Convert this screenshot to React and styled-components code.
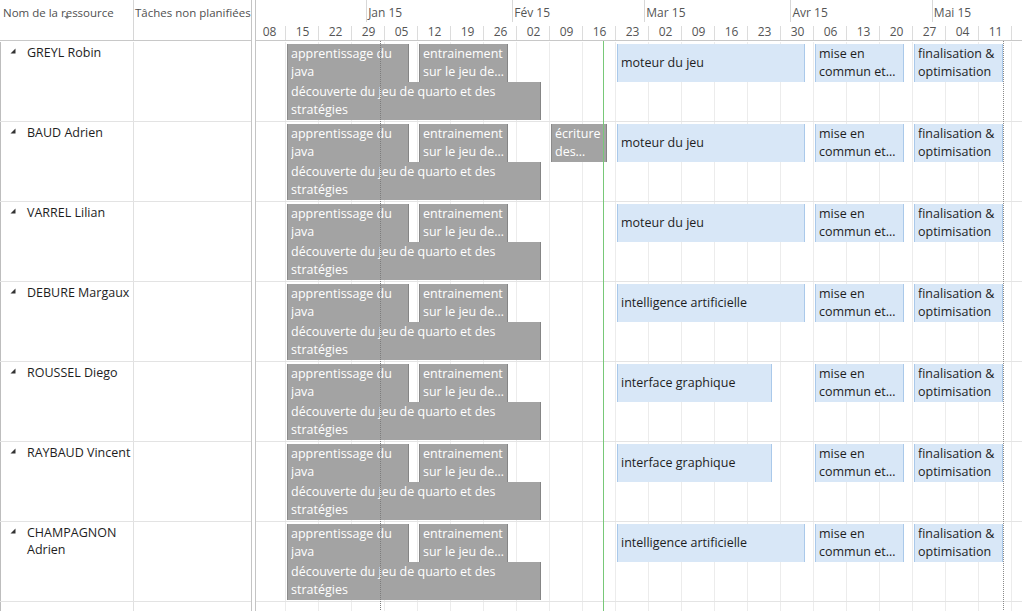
import React from 'react';
import styled, { createGlobalStyle } from 'styled-components';

const WEEK = 33;
const DAY = WEEK / 7;

const Global = createGlobalStyle`
  html, body { margin: 0; padding: 0; background: #fff; }
  body {
    font-family: "Open Sans", "Noto Sans", sans-serif;
    font-size: 12.5px;
    color: #222;
    overflow: hidden;
  }
`;

const Page = styled.div`
  display: flex;
  width: 1022px;
  height: 611px;
  overflow: hidden;
  background: #fff;
`;

const LeftPanel = styled.div`
  width: 251px;
  flex: none;
  border-right: 1px solid #c4c4c4;
`;

const Splitter = styled.div`
  width: 3px;
  flex: none;
`;

const Timeline = styled.div`
  flex: 1;
  min-width: 0;
  border-left: 1px solid #c4c4c4;
  overflow: hidden;
`;

const GridHeader = styled.div`
  display: grid;
  grid-template-columns: 134px 117px;
  height: 41px;
  box-sizing: border-box;
  border-bottom: 1px solid #c8c8c8;
`;

const HeaderCell = styled.div`
  position: relative;
  padding: 5px 0 0 ${p => p.$pl || 3}px;
  line-height: 16px;
  font-size: 11.5px;
  color: #505050;
  white-space: nowrap;
  border-right: ${p => (p.$divider ? '1px solid #d6d6d6' : 'none')};
`;

const SortArrow = styled.span`
  position: absolute;
  left: 64px;
  top: 16px;
  width: 0;
  height: 0;
  border-left: 3px solid transparent;
  border-right: 3px solid transparent;
  border-top: 3px solid #7a7a7a;
`;

const RowList = styled.div`
  padding-top: 1px;
`;

const ResourceRow = styled.div`
  display: grid;
  grid-template-columns: 134px 117px;
  height: 80px;
  box-sizing: border-box;
  border-bottom: 1px solid #e3e3e3;
`;

const NameCell = styled.div`
  display: flex;
  align-items: flex-start;
  border-left: 1px solid #bdbdbd;
  border-right: 1px solid #e0e0e0;
  padding: 2px 1px 0 9px;
  line-height: 17px;
  color: #1e1e1e;
`;

const Toggle = styled.svg`
  flex: none;
  width: 6px;
  height: 6px;
  margin: 4px 11px 0 0;
`;

const EmptyCell = styled.div``;

const TopTier = styled.div`
  display: flex;
  height: 22px;
  margin-left: -3px;
`;

const MonthCell = styled.div`
  flex: none;
  box-sizing: border-box;
  height: 22px;
  border-left: ${p => (p.$first ? 'none' : '1px solid #d8d8d8')};
  padding: 5px 0 0 1px;
  line-height: 16px;
  font-size: 12px;
  color: #555;
  white-space: nowrap;
`;

const LowerTier = styled.div`
  display: flex;
  height: 19px;
  margin-left: -3px;
  box-sizing: border-box;
  border-bottom: 1px solid #c8c8c8;
`;

const WeekCell = styled.div`
  flex: none;
  position: relative;
  box-sizing: border-box;
  width: ${WEEK}px;
  height: 18px;
  padding-top: 1px;
  line-height: 17px;
  font-size: 12px;
  text-align: center;
  color: #555;
  &::after {
    content: '';
    position: absolute;
    right: 0;
    top: 4px;
    bottom: 0;
    width: 1px;
    background: #dcdcdc;
  }
`;

const Body = styled.div`
  position: relative;
  padding-top: 1px;
`;

const ChartRow = styled.div`
  position: relative;
  height: 80px;
  box-sizing: border-box;
  border-bottom: 1px solid #e4e4e4;
  background-image: repeating-linear-gradient(
    to right,
    transparent 0,
    transparent 32px,
    #ececec 32px,
    #ececec 33px
  );
  background-position: -3px 0;
`;

const Bar = styled.div`
  position: absolute;
  top: ${p => (p.$lane ? 40 : 2)}px;
  height: 38px;
  box-sizing: border-box;
  display: flex;
  flex-direction: column;
  justify-content: center;
  padding: 0 3px;
  line-height: 18px;
  overflow: hidden;
  background: ${p => (p.$kind === 'done' ? '#a3a3a3' : '#d8e7f7')};
  color: ${p => (p.$kind === 'done' ? '#ffffff' : '#1e1e1e')};
  border-left: 1px solid ${p => (p.$kind === 'done' ? '#8b8b8b' : '#aac9ea')};
  border-right: 1px solid ${p => (p.$kind === 'done' ? '#858585' : '#aac9ea')};
`;

const BarLine = styled.span`
  display: block;
  white-space: nowrap;
  overflow: hidden;
`;

const TodayLine = styled.div`
  position: absolute;
  top: 0;
  bottom: 0;
  left: 347px;
  width: 1px;
  background: #78c878;
  z-index: 3;
`;

const DottedLine = styled.div`
  position: absolute;
  top: 0;
  bottom: 0;
  width: 0;
  border-left: 1px dotted ${p => p.$color};
  z-index: 2;
`;

const weeks = ['08', '15', '22', '29', '05', '12', '19', '26', '02', '09', '16', '23', '02', '09', '16', '23', '30', '06', '13', '20', '27', '04', '11', ''];

const months = [
  { label: '', days: 24 },
  { label: 'Jan 15', days: 31 },
  { label: 'Fév 15', days: 28 },
  { label: 'Mar 15', days: 31 },
  { label: 'Avr 15', days: 30 },
  { label: 'Mai 15', days: 31 },
];

const common = {
  appr: { kind: 'done', lane: 0, left: 31, width: 122, lines: ['apprentissage du', 'java'] },
  entr: { kind: 'done', lane: 0, left: 163, width: 89, lines: ['entrainement', 'sur le jeu de…'] },
  deco: { kind: 'done', lane: 1, left: 31, width: 254, lines: ['découverte du jeu de quarto et des', 'stratégies'] },
  ecri: { kind: 'done', lane: 0, left: 295, width: 56, lines: ['écriture', 'des…'] },
  mise: { kind: 'todo', lane: 0, left: 559, width: 89, lines: ['mise en', 'commun et…'] },
  fina: { kind: 'todo', lane: 0, left: 658, width: 89, lines: ['finalisation &', 'optimisation'] },
};

const big = (label, width = 188) => ({ kind: 'todo', lane: 0, left: 361, width, lines: [label] });

const resources = [
  { name: 'GREYL Robin', bars: [common.appr, common.entr, common.deco, big('moteur du jeu'), common.mise, common.fina] },
  { name: 'BAUD Adrien', bars: [common.appr, common.entr, common.deco, common.ecri, big('moteur du jeu'), common.mise, common.fina] },
  { name: 'VARREL Lilian', bars: [common.appr, common.entr, common.deco, big('moteur du jeu'), common.mise, common.fina] },
  { name: 'DEBURE Margaux', bars: [common.appr, common.entr, common.deco, big('intelligence artificielle'), common.mise, common.fina] },
  { name: 'ROUSSEL Diego', bars: [common.appr, common.entr, common.deco, big('interface graphique', 155), common.mise, common.fina] },
  { name: 'RAYBAUD Vincent', bars: [common.appr, common.entr, common.deco, big('interface graphique', 155), common.mise, common.fina] },
  { name: 'CHAMPAGNON Adrien', bars: [common.appr, common.entr, common.deco, big('intelligence artificielle'), common.mise, common.fina] },
  { name: '', bars: [] },
];

function CollapseIcon() {
  return (
    <Toggle viewBox="0 0 6 6">
      <polygon points="5.5,0.5 5.5,5.5 0.5,5.5" fill="#333" />
    </Toggle>
  );
}

export default function App() {
  return (
    <Page>
      <Global />
      <LeftPanel>
        <GridHeader>
          <HeaderCell $divider>
            Nom de la ressource
            <SortArrow />
          </HeaderCell>
          <HeaderCell $pl={1}>Tâches non planifiées</HeaderCell>
        </GridHeader>
        <RowList>
          {resources.map((r, i) => (
            <ResourceRow key={i}>
              <NameCell>
                {r.name && <CollapseIcon />}
                <span>{r.name}</span>
              </NameCell>
              <EmptyCell />
            </ResourceRow>
          ))}
        </RowList>
      </LeftPanel>
      <Splitter />
      <Timeline>
        <TopTier>
          {months.map((m, i) => (
            <MonthCell key={i} $first={i === 0} style={{ width: m.days * DAY }}>
              {m.label}
            </MonthCell>
          ))}
        </TopTier>
        <LowerTier>
          {weeks.map((w, i) => (
            <WeekCell key={i}>{w}</WeekCell>
          ))}
        </LowerTier>
        <Body>
          <DottedLine $color="#7c7c7c" style={{ left: 124 }} />
          <DottedLine $color="#8a8a8a" style={{ left: 747 }} />
          <TodayLine />
          {resources.map((r, i) => (
            <ChartRow key={i}>
              {r.bars.map((b, j) => (
                <Bar key={j} $kind={b.kind} $lane={b.lane} style={{ left: b.left, width: b.width }}>
                  {b.lines.map((l, k) => (
                    <BarLine key={k}>{l}</BarLine>
                  ))}
                </Bar>
              ))}
            </ChartRow>
          ))}
        </Body>
      </Timeline>
    </Page>
  );
}
